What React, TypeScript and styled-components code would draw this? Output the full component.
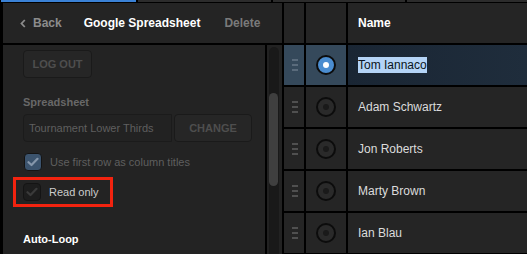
import React from 'react';
import styled, { createGlobalStyle } from 'styled-components';

const Global = createGlobalStyle`
  html, body { margin: 0; padding: 0; background: #000; }
  body { font-family: "Liberation Sans", Arial, Helvetica, sans-serif; }
  * { box-sizing: border-box; }
`;

const Root = styled.div`
  width: 527px;
  height: 254px;
  overflow: hidden;
  background: #000;
  display: flex;
  flex-direction: column;
`;

const TabStrip = styled.div`
  height: 2px;
  margin-bottom: 1px;
  padding-left: 1px;
  display: flex;
  gap: 2px;
`;

const TabMark = styled.div<{ $active?: boolean; $w?: number }>`
  height: 2px;
  width: ${(p) => (p.$w ? `${p.$w}px` : 'auto')};
  flex: ${(p) => (p.$w ? 'none' : '1')};
  background: ${(p) => (p.$active ? '#3b82d6' : '#2c2c2c')};
`;

const Main = styled.div`
  flex: 1;
  display: flex;
  gap: 2px;
  padding-left: 3px;
  min-height: 0;
`;

const LeftPanel = styled.div`
  width: 279px;
  display: flex;
  flex-direction: column;
  gap: 2px;
`;

const Header = styled.div`
  height: 40px;
  background: #242424;
  display: flex;
  align-items: center;
  padding-left: 17px;
  font-size: 12px;
  font-weight: bold;
`;

const BackLink = styled.div`
  display: flex;
  align-items: center;
  gap: 7px;
  color: #8c8c8c;
`;

const Title = styled.div`
  color: #fff;
  margin-left: 22px;
`;

const DeleteLink = styled.div`
  color: #7a7a7a;
  margin-left: 24px;
`;

const PanelBody = styled.div`
  flex: 1;
  display: flex;
  gap: 2px;
  min-height: 0;
`;

const Content = styled.div`
  width: 262px;
  background: #232323;
  padding: 5px 0 0 20px;
  display: flex;
  flex-direction: column;
  align-items: flex-start;
`;

const Track = styled.div`
  flex: 1;
  background: #222;
  padding: 2px 3px 0 2px;
`;

const Channel = styled.div`
  height: 100%;
  background: #191919;
  border-radius: 5px 5px 0 0;
  padding-top: 46px;
`;

const Thumb = styled.div`
  width: 9px;
  height: 93px;
  background: #3f3f3f;
  border-radius: 5px;
`;

const GhostButton = styled.div<{ $w: number; $joined?: boolean }>`
  width: ${(p) => p.$w}px;
  height: 28px;
  border: 1px solid #1a1a1a;
  border-radius: 4px;
  background: #262626;
  color: #4e4e4e;
  font-size: 11px;
  font-weight: bold;
  display: flex;
  align-items: center;
  justify-content: center;
`;

const Label = styled.div`
  margin-top: 17px;
  height: 14px;
  line-height: 14px;
  font-size: 11px;
  font-weight: bold;
  color: #686868;
`;

const InputRow = styled.div`
  margin-top: 5px;
  display: flex;
  gap: 2px;
`;

const TextField = styled.div`
  width: 149px;
  height: 28px;
  border: 1px solid #1b1b1b;
  border-radius: 4px 0 0 4px;
  background: #222;
  color: #5f5f5f;
  font-size: 11px;
  display: flex;
  align-items: center;
  padding-left: 5px;
`;

const CheckRow = styled.div<{ $boxed?: boolean; $top: number }>`
  margin-top: ${(p) => p.$top}px;
  display: flex;
  align-items: center;
  gap: 8px;
  ${(p) =>
    p.$boxed
      ? `border: 3px solid #f2230f; padding: 3px 11px 3px 7px; margin-left: -10px;`
      : `padding-left: 1px;`}
`;

const Box = styled.div<{ $on?: boolean }>`
  width: 18px;
  height: 18px;
  border-radius: 4px;
  border: 1px solid #141414;
  background: ${(p) => (p.$on ? '#3b536d' : '#1d1d1d')};
  display: flex;
  align-items: center;
  justify-content: center;
`;

const CheckText = styled.div<{ $bright?: boolean }>`
  font-size: 11px;
  color: ${(p) => (p.$bright ? '#cccccc' : '#5f5f5f')};
`;

const Section = styled.div`
  margin-top: 26px;
  font-size: 11px;
  font-weight: bold;
  color: #fff;
`;

const Table = styled.div`
  flex: 1;
  display: grid;
  grid-template-columns: 20px 40px 1fr;
  grid-auto-rows: 40px;
  gap: 2px;
  background: #000;
`;

const Cell = styled.div<{ $sel?: boolean; $name?: boolean }>`
  background: ${(p) =>
    p.$sel
      ? p.$name
        ? 'linear-gradient(90deg, #1a2634, #1f2d3c)'
        : '#35495b'
      : '#252525'};
  display: flex;
  align-items: center;
  justify-content: ${(p) => (p.$name ? 'flex-start' : 'center')};
  padding-left: ${(p) => (p.$name ? '10px' : '0')};
  font-size: 12px;
  color: #dcdcdc;
`;

const HeadCell = styled(Cell)`
  font-weight: bold;
  color: #fff;
`;

const Grip = styled.div<{ $sel?: boolean }>`
  display: flex;
  flex-direction: column;
  gap: 3px;
  margin-left: 2px;
  & > span {
    width: 6px;
    height: 2px;
    background: ${(p) => (p.$sel ? '#5a6b7c' : '#505050')};
  }
`;

const Radio = styled.div<{ $on?: boolean }>`
  width: 20px;
  height: 20px;
  border-radius: 50%;
  border: 2px solid #0c0c0c;
  background: ${(p) => (p.$on ? '#4b8dd0' : '#2a2a2a')};
  display: flex;
  align-items: center;
  justify-content: center;
  &::after {
    content: '';
    width: 6px;
    height: 6px;
    border-radius: 50%;
    background: ${(p) => (p.$on ? '#fff' : '#1a1a1a')};
  }
`;

const Selected = styled.span`
  background: #b4d4f7;
  color: #0a1420;
  padding: 1px 0;
`;

const Check = ({ color }: { color: string }) => (
  <svg width="12" height="10" viewBox="0 0 12 10">
    <path d="M1.5 5.2 L4.5 8 L10.5 1.8" fill="none" stroke={color} strokeWidth="2.2" strokeLinecap="round" strokeLinejoin="round" />
  </svg>
);

const names = ['Tom Iannaco', 'Adam Schwartz', 'Jon Roberts', 'Marty Brown', 'Ian Blau'];

export default function App() {
  return (
    <Root>
      <Global />
      <TabStrip>
        <TabMark $active $w={135} />
        <TabMark $w={133} />
        <TabMark $w={132} />
        <TabMark />
      </TabStrip>
      <Main>
        <LeftPanel>
          <Header>
            <BackLink>
              <svg width="6" height="9" viewBox="0 0 6 9">
                <path d="M4.8 1 L1.5 4.5 L4.8 8" fill="none" stroke="#8c8c8c" strokeWidth="1.8" />
              </svg>
              Back
            </BackLink>
            <Title>Google Spreadsheet</Title>
            <DeleteLink>Delete</DeleteLink>
          </Header>
          <PanelBody>
            <Content>
              <GhostButton $w={69}>LOG OUT</GhostButton>
              <Label>Spreadsheet</Label>
              <InputRow>
                <TextField>Tournament Lower Thirds</TextField>
                <GhostButton $w={78}>CHANGE</GhostButton>
              </InputRow>
              <CheckRow $top={11}>
                <Box $on>
                  <Check color="#8596aa" />
                </Box>
                <CheckText>Use first row as column titles</CheckText>
              </CheckRow>
              <CheckRow $boxed $top={6}>
                <Box>
                  <Check color="#3a3a3a" />
                </Box>
                <CheckText $bright>Read only</CheckText>
              </CheckRow>
              <Section>Auto-Loop</Section>
            </Content>
            <Track>
              <Channel>
                <Thumb />
              </Channel>
            </Track>
          </PanelBody>
        </LeftPanel>
        <Table>
          <HeadCell />
          <HeadCell />
          <HeadCell $name>Name</HeadCell>
          {names.map((n, i) => {
            const sel = i === 0;
            return (
              <React.Fragment key={n}>
                <Cell $sel={sel}>
                  <Grip $sel={sel}>
                    <span />
                    <span />
                    <span />
                  </Grip>
                </Cell>
                <Cell $sel={sel}>
                  <Radio $on={sel} />
                </Cell>
                <Cell $sel={sel} $name>
                  {sel ? <Selected>{n}</Selected> : n}
                </Cell>
              </React.Fragment>
            );
          })}
        </Table>
      </Main>
    </Root>
  );
}
